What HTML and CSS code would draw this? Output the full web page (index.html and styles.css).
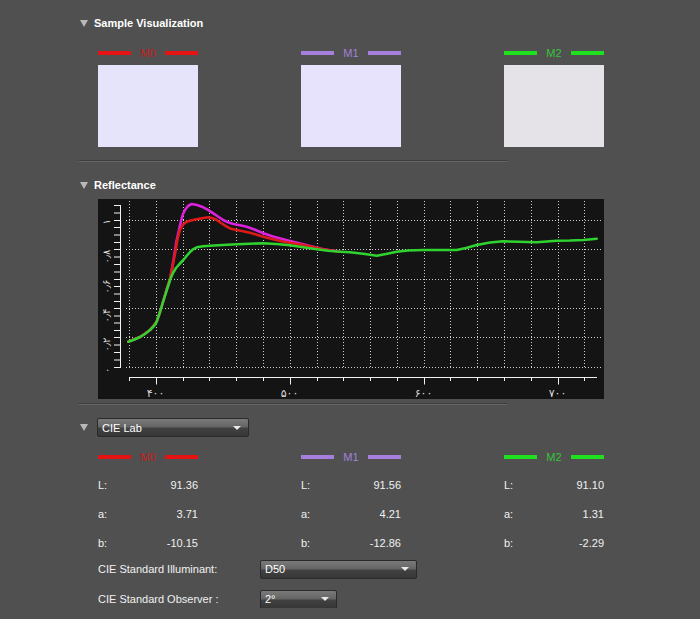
FILE: index.html
```html
<!DOCTYPE html>
<html>
<head>
<meta charset="utf-8">
<link rel="stylesheet" href="styles.css">
</head>
<body>
<div class="page">
  <div class="sec-head"><span class="tri"></span><span class="sec-title">Sample Visualization</span></div>
  <div class="cols cols-vis">
    <div class="col">
      <div class="legend m0"><i></i><span>M0</span><i></i></div>
      <div class="swatch sw0"></div>
    </div>
    <div class="col">
      <div class="legend m1"><i></i><span>M1</span><i></i></div>
      <div class="swatch sw1"></div>
    </div>
    <div class="col">
      <div class="legend m2"><i></i><span>M2</span><i></i></div>
      <div class="swatch sw2"></div>
    </div>
  </div>
  <div class="sep sep1"></div>

  <div class="sec-head sec-refl"><span class="tri"></span><span class="sec-title">Reflectance</span></div>
  <div class="chart">
    <svg width="506" height="200" viewBox="0 0 506 200">
      <g class="grid">
        <path d="M31.5 2V170M58.5 2V170M85.5 2V170M111.5 2V170M138.5 2V170M165.5 2V170M192.5 2V170M219.5 2V170M245.5 2V170M272.5 2V170M299.5 2V170M326.5 2V170M352.5 2V170M379.5 2V170M406.5 2V170M433.5 2V170M460.5 2V170M486.5 2V170"/>
        <path d="M28 21.5H503M28 50.5H503M28 80.5H503M28 109.5H503M28 138.5H503M28 168.5H503"/>
      </g>
      <g class="axis">
        <path d="M22.5 6.5V168.5"/>
        <path d="M16 6.5H23M16 14H23M16 21.5H23M16 28.5H23M16 36H23M16 43.5H23M16 50.5H23M16 58H23M16 65.5H23M16 73H23M16 80.5H23M16 87.5H23M16 95H23M16 102.5H23M16 109.5H23M16 117H23M16 124H23M16 131.5H23M16 138.5H23M16 146H23M16 153.5H23M16 161H23M16 168.5H23"/>
        <path d="M31.5 178.5H499"/>
        <path d="M31.5 178V182M58.5 178V185.5M85.5 178V182M111.5 178V182M138.5 178V182M165.5 178V182M192.5 178V185.5M219.5 178V182M245.5 178V182M272.5 178V182M299.5 178V182M326.5 178V185.5M352.5 178V182M379.5 178V182M406.5 178V182M433.5 178V182M460.5 178V185.5M486.5 178V182"/>
      </g>
      <g class="xlab">
        <text x="57.5" y="198">۴۰۰</text>
        <text x="191.5" y="198">۵۰۰</text>
        <text x="325.5" y="198">۶۰۰</text>
        <text x="459.5" y="198">۷۰۰</text>
      </g>
      <g class="ylab">
        <text transform="translate(12 20) rotate(-90)">۱</text>
        <text transform="translate(12 50.5) rotate(-90)">۰٫۸</text>
        <text transform="translate(12 80.5) rotate(-90)">۰٫۶</text>
        <text transform="translate(12 109.5) rotate(-90)">۰٫۴</text>
        <text transform="translate(12 138.5) rotate(-90)">۰٫۲</text>
        <text transform="translate(12 168.5) rotate(-90)">۰</text>
      </g>
      <polyline class="c-mag" points="30.3,142.7 42,138 52,131 58.7,122.7 62,113 65,103 68.5,91 72,81 76,58 78.5,42 80.3,34.3 83,22 85,15 87,11 90,7 93.7,5 99,6 105.3,8.3 110,10.8 115.3,14.3 120,17.5 125.3,21 130,23.3 135.3,25 142,26.3 148.7,27.7 157,30.8 165.3,34.3 175,37.5 185.3,40.3 195,42.8 205.3,45.3 215,47.8 225.3,50.3 232,51.3 238.7,52"/>
      <polyline class="c-red" points="30.3,142.7 42,138 52,131 58.7,122.7 62,113 65,103 68.5,91 72,79.3 74,70 77,55 79.5,40 82,31 85,25.5 88.7,22.7 93,21.5 98.7,20.3 104,19.2 110.3,18.3 114,19 118.7,21 123,24 128.7,27.7 133,29.8 138.7,31 145,32.2 152,33.7 158,35.6 165.3,37.7 175,40.3 185.3,42.7 195,44.3 205.3,46 215,48 225.3,50.3 233,51.5 242,52.7"/>
      <polyline class="c-grn" points="30.3,142.7 36,140.8 42,138 47,135 52,131 56,127 58.7,122.7 62,113 65,103 68.5,92 72,81 75,74 78,69 81.5,65 85.3,61 89,56.5 92,53 95,50.3 98.7,48.3 105,47.2 112,46.7 125,46 138.7,45.3 152,44.7 165.3,44.3 178,45 192,46.3 205,48.2 218.7,50.3 230,51.8 242,52.7 252,53.3 267,55 278.7,56.7 288,55 298.7,52.7 310,51.5 325.3,51 340,51 358.7,51 368,49 378.7,46 392,43.5 405.3,42.3 420,42.8 438.7,43.3 458.7,41.7 472,41.5 485.3,41 498.7,39.7"/>
    </svg>
  </div>
  <div class="sep sep2"></div>

  <div class="lab-head">
    <span class="tri"></span>
    <div class="dd dd-lab"><span>CIE Lab</span><span class="dd-arrow"></span></div>
  </div>
  <div class="cols cols-lab">
    <div class="col">
      <div class="legend m0 legend-lab"><i></i><span>M0</span><i></i></div>
      <div class="vrow"><span>L:</span><span>91.36</span></div>
      <div class="vrow"><span>a:</span><span>3.71</span></div>
      <div class="vrow"><span>b:</span><span>-10.15</span></div>
    </div>
    <div class="col">
      <div class="legend m1 legend-lab"><i></i><span>M1</span><i></i></div>
      <div class="vrow"><span>L:</span><span>91.56</span></div>
      <div class="vrow"><span>a:</span><span>4.21</span></div>
      <div class="vrow"><span>b:</span><span>-12.86</span></div>
    </div>
    <div class="col">
      <div class="legend m2 legend-lab"><i></i><span>M2</span><i></i></div>
      <div class="vrow"><span>L:</span><span>91.10</span></div>
      <div class="vrow"><span>a:</span><span>1.31</span></div>
      <div class="vrow"><span>b:</span><span>-2.29</span></div>
    </div>
  </div>
  <div class="set-row set-ill">
    <span class="set-label">CIE Standard Illuminant:</span>
    <div class="dd dd-ill"><span>D50</span><span class="dd-arrow"></span></div>
  </div>
  <div class="set-row set-obs">
    <span class="set-label">CIE Standard Observer :</span>
    <div class="dd dd-obs"><span>2°</span><span class="dd-arrow"></span></div>
  </div>
</div>
</body>
</html>
```
FILE: styles.css
```css
* { box-sizing: border-box; margin: 0; padding: 0; }
html, body { background: #505050; }
body {
  font-family: "Liberation Sans", Arial, sans-serif;
  font-size: 11px;
  color: #f0f0f0;
  overflow: hidden;
}
.page { padding: 16px 0 0 79px; }

.sec-head { display: flex; align-items: center; height: 14px; }
.tri {
  display: block;
  width: 0; height: 0;
  margin-left: 1px;
  border-left: 4px solid transparent;
  border-right: 4px solid transparent;
  border-top: 7px solid #b8b8b8;
}
.sec-title { margin-left: 6px; font-weight: bold; color: #ffffff; font-size: 11px; }
.sec-refl { margin-top: 16px; }

.cols { display: flex; gap: 103px; margin-left: 19px; }
.cols-vis { margin-top: 17px; }
.col { width: 100px; }

.legend {
  display: flex; align-items: center; justify-content: space-between;
  height: 12px; margin-bottom: 6px;
}
.legend i { display: block; width: 33px; height: 4px; }
.legend span { font-size: 11px; }
.m0 i { background: #e41414; }
.m0 span { color: #c41c1c; }
.m1 i { background: #a67fdd; }
.m1 span { color: #a182d8; }
.m2 i { background: #1fe01f; }
.m2 span { color: #36c436; }

.swatch { width: 100px; height: 82px; }
.sw0 { background: #e6e4fa; }
.sw1 { background: #e7e3fd; }
.sw2 { background: #e5e3e7; }

.sep {
  width: 428px; height: 2px;
  border-top: 1px solid #3e3e3e;
  border-bottom: 1px solid #666666;
}
.sep1 { margin-top: 13px; }
.sep2 { margin-top: 4px; }

.chart {
  width: 506px; height: 200px;
  margin: 7px 0 0 19px;
  background: #141414;
}
.chart svg { display: block; }
.grid path { stroke: #cfcfcf; stroke-width: 1; stroke-dasharray: 1 2; fill: none; }
.axis path { stroke: #f2f2f2; stroke-width: 1; fill: none; }
.xlab text { fill: #dcdcdc; font-family: "DejaVu Sans", sans-serif; font-size: 11px; text-anchor: middle; }
.ylab text { fill: #dcdcdc; font-family: "DejaVu Sans", sans-serif; font-size: 10px; text-anchor: end; }
polyline { fill: none; stroke-width: 2.6; stroke-linejoin: round; stroke-linecap: round; }
.c-mag { stroke: #dc22dc; }
.c-red { stroke: #dc1a1a; }
.c-grn { stroke: #2fd22f; }

.lab-head { display: flex; align-items: center; margin-top: 13px; }
.lab-head .dd { margin-left: 9px; }

.dd {
  display: flex; align-items: center; justify-content: space-between;
  height: 19px;
  padding: 0 7px 0 4px;
  border: 1px solid #2a2a2a;
  border-radius: 2px;
  background: linear-gradient(#7a7a7a 0%, #646464 48%, #424242 52%, #363636 100%);
  color: #ffffff;
  font-size: 11px;
}
.dd-arrow {
  display: block; width: 0; height: 0;
  border-left: 4px solid transparent;
  border-right: 4px solid transparent;
  border-top: 4px solid #e8e8e8;
}
.dd-lab { width: 152px; }
.dd-ill { width: 157px; }
.dd-obs { width: 77px; }

.cols-lab { margin-top: 14px; }
.legend-lab { margin-bottom: 7px; }
.vrow { display: flex; justify-content: space-between; align-items: center; height: 29px; }

.set-row { display: flex; align-items: center; margin-left: 19px; height: 18px; }
.set-label { width: 162px; }
.set-ill { margin-top: 3px; }
.set-obs { margin-top: 12px; }
```
